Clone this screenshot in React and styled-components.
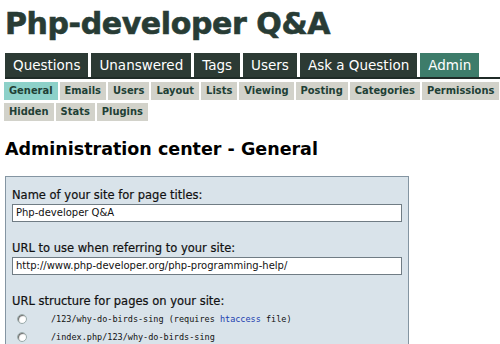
import styled, { createGlobalStyle } from "styled-components";

const Global = createGlobalStyle`
    body {
        margin: 0;
        background: #fff;
        font-family: "DejaVu Sans", Verdana, sans-serif;
    }
`

const Page = styled.div`
    padding: 0 0 0 5px;
    overflow: hidden;
    height: 344px;
`

const Title = styled.h1`
    margin: 0;
    padding-top: 4px;
    font-size: 30px;
    line-height: 40px;
    font-weight: bold;
    color: #283c35;
    letter-spacing: -0.4px;
    -webkit-text-stroke: 0.6px #283c35;
`

const TabBar = styled.div`
    display: flex;
    gap: 3px;
    margin-top: 9px;
    border-bottom: 2px solid #1f2b27;
`

const Tab = styled.div`
    background: ${props => props.active ? "#3d7c6a" : "#2c3a34"};
    color: #fff;
    font-size: 13.5px;
    line-height: 24px;
    padding: 0 8px;
`

const SubTabs = styled.div`
    display: flex;
    flex-wrap: wrap;
    gap: 3px 2px;
    margin: 3px 0 0 -1px;
    width: 500px;
`

const SubTab = styled.div`
    background: ${props => props.active ? "#8dd1c9" : "#d2d2ca"};
    color: #213f35;
    font-family: "DejaVu Sans Condensed", "DejaVu Sans", sans-serif;
    font-size: 11px;
    font-weight: bold;
    line-height: 18px;
    padding: 0 5px;
`

const Heading = styled.h2`
    margin: 16px 0 0;
    font-size: 17.5px;
    font-weight: bold;
    color: #000;
    line-height: 24px;
`

const FormBox = styled.div`
    margin-top: 15px;
    width: 404px;
    background: #d9e3ea;
    border: 1px solid #8495a2;
    padding: 11px 0 0 6px;
    box-sizing: border-box;
    height: 200px;
`

const Field = styled.div`
    margin-bottom: 19px;
`

const Label = styled.div`
    font-size: 11.5px;
    color: #111;
    line-height: 14px;
    margin-bottom: 2px;
    -webkit-text-stroke: 0.2px #111;
`

const Input = styled.div`
    width: 390px;
    height: 18px;
    box-sizing: border-box;
    background: #fff;
    border: 1px solid #707c84;
    font-size: 10px;
    line-height: 16px;
    padding: 0 3px;
    color: #111;
`

const Options = styled.div`
    margin-top: 0;
`

const Option = styled.div`
    display: flex;
    align-items: center;
    height: 18px;
    font-family: "DejaVu Sans Mono", monospace;
    font-size: 8.5px;
    color: #111;
`

const Radio = styled.span`
    width: 8px;
    height: 8px;
    border-radius: 50%;
    border: 1px solid #9aa;
    background: #fff;
    margin: 0 24px 0 5px;
    box-shadow: inset 1px 1px 1px #666;
`

const Link = styled.span`
    color: #2040b0;
`

const tabs = ["Questions", "Unanswered", "Tags", "Users", "Ask a Question", "Admin"]
const subs = ["General", "Emails", "Users", "Layout", "Lists", "Viewing", "Posting", "Categories", "Permissions", "Hidden", "Stats", "Plugins"]

function App() {
    return (
        <Page>
            <Global />
            <Title>Php-developer Q&amp;A</Title>
            <TabBar>
                {tabs.map(t => <Tab key={t} active={t === "Admin"}>{t}</Tab>)}
            </TabBar>
            <SubTabs>
                {subs.map(s => <SubTab key={s} active={s === "General"}>{s}</SubTab>)}
            </SubTabs>
            <Heading>Administration center - General</Heading>
            <FormBox>
                <Field>
                    <Label>Name of your site for page titles:</Label>
                    <Input>Php-developer Q&amp;A</Input>
                </Field>
                <Field>
                    <Label>URL to use when referring to your site:</Label>
                    <Input>http://www.php-developer.org/php-programming-help/</Input>
                </Field>
                <Label>URL structure for pages on your site:</Label>
                <Options>
                    <Option><Radio /><span>/123/why-do-birds-sing (requires <Link>htaccess</Link> file)</span></Option>
                    <Option><Radio /><span>/index.php/123/why-do-birds-sing</span></Option>
                </Options>
            </FormBox>
        </Page>
    );
}

export default App;
